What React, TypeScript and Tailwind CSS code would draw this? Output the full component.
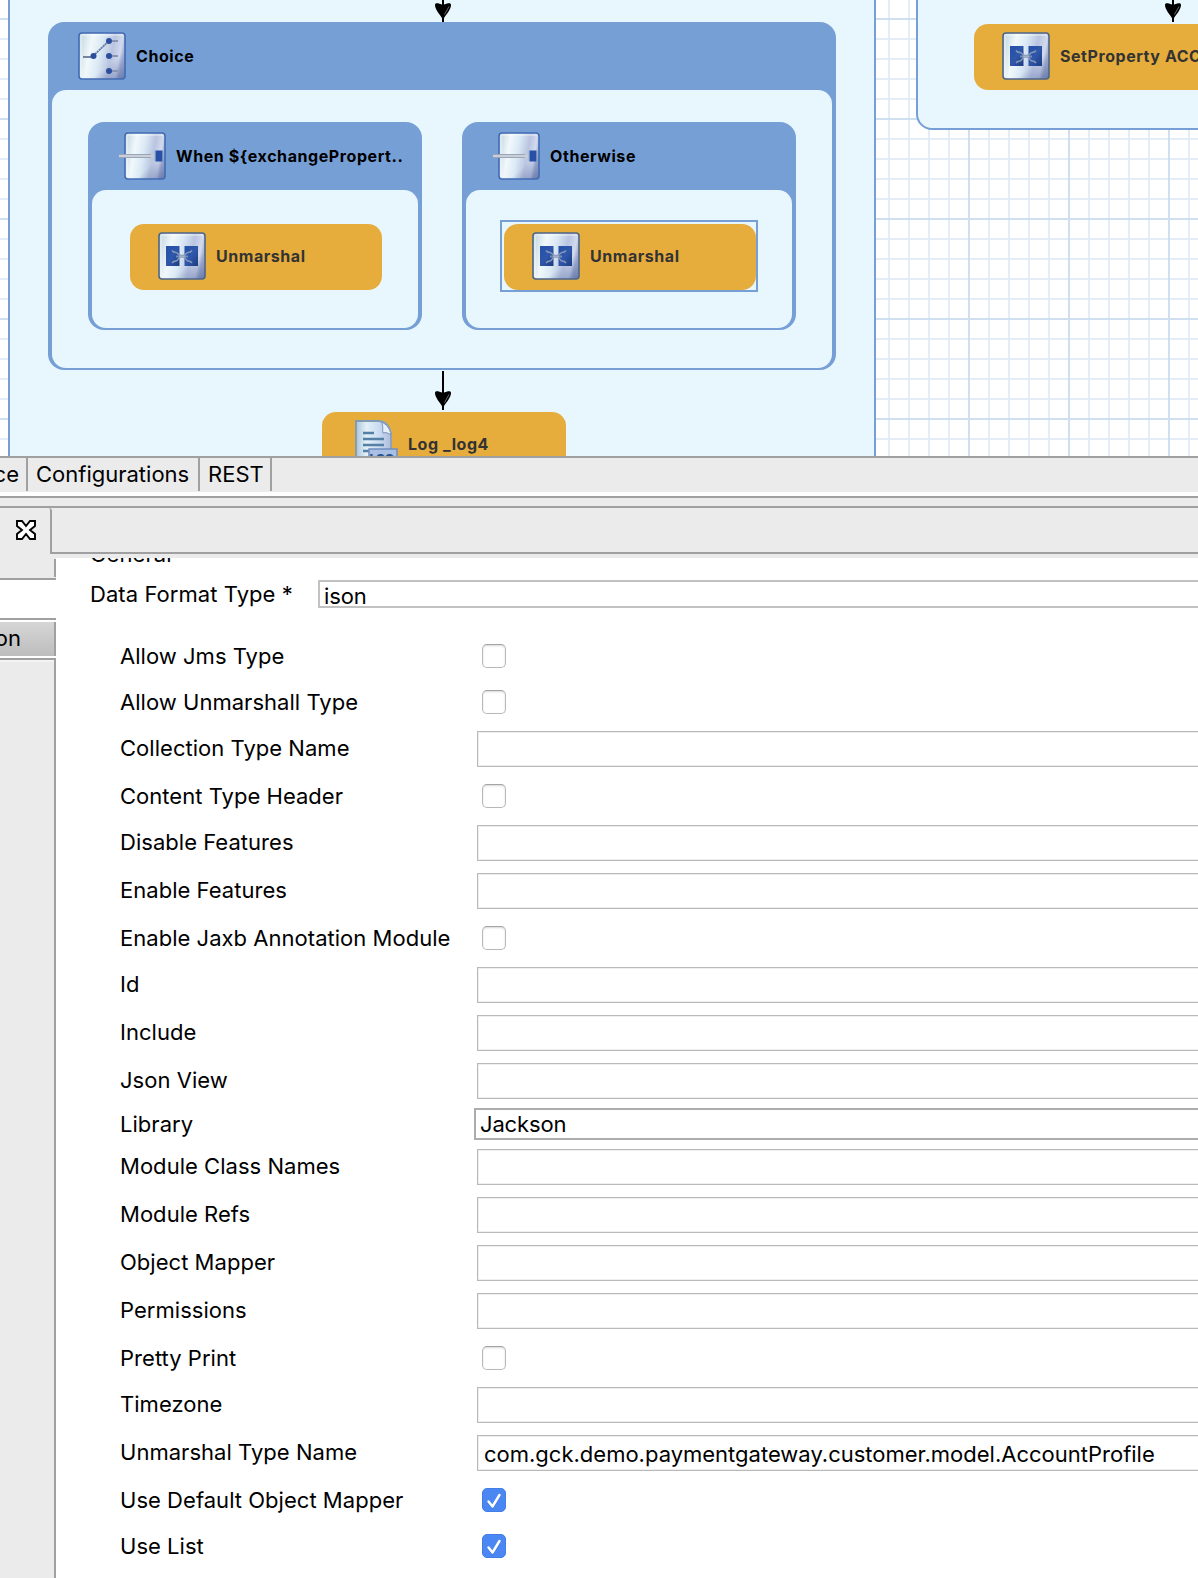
import type { ReactNode } from "react";

const gridStyle = {
  backgroundImage: [
    "linear-gradient(to right, #d0dff0 2px, transparent 2px)",
    "linear-gradient(to bottom, #d0dff0 2px, transparent 2px)",
    "linear-gradient(to right, #e4ecf7 2px, transparent 2px)",
    "linear-gradient(to bottom, #e4ecf7 2px, transparent 2px)",
  ].join(","),
  backgroundSize: "100px 100px, 100px 100px, 20px 20px, 20px 20px",
  backgroundPosition: "68px 0, 0 18px, 8px 0, 0 18px",
};

function Plate({ x = 1, w = 46, edge }: { x?: number; w?: number; edge: string }) {
  return (
    <>
      <defs>
        <linearGradient id="plate" x1="0" y1="0.1" x2="1" y2="0.3">
          <stop offset="0" stopColor="#bfd5e0" />
          <stop offset="0.28" stopColor="#f1f8fb" />
          <stop offset="0.5" stopColor="#dbeaf5" />
          <stop offset="0.75" stopColor="#b9c4e0" />
          <stop offset="0.92" stopColor="#d2daee" />
          <stop offset="1" stopColor="#a6b1d4" />
        </linearGradient>
        <linearGradient id="shade" x1="0.5" y1="0.4" x2="1" y2="1">
          <stop offset="0.4" stopColor="#5b6ea5" stopOpacity="0" />
          <stop offset="1" stopColor="#4a5f98" stopOpacity="0.7" />
        </linearGradient>
        <linearGradient id="ink" x1="0" y1="0" x2="1" y2="1">
          <stop offset="0" stopColor="#2450a8" />
          <stop offset="0.5" stopColor="#2f57aa" />
          <stop offset="1" stopColor="#1d3c80" />
        </linearGradient>
      </defs>
      <rect x={x} y="1" width={w} height="46" rx="3" fill="url(#plate)" />
      <rect x={x} y="1" width={w} height="46" rx="3" fill="url(#shade)" stroke={edge} strokeWidth="1.6" />
      <path d={`M${x + 2} 45V3H${x + w - 2}`} fill="none" stroke="#fff" strokeOpacity="0.45" strokeWidth="1.5" />
    </>
  );
}

function ChoiceIcon() {
  return (
    <svg viewBox="0 0 48 48" className="size-12 shrink-0">
      <Plate edge="#426bb4" />
      <g stroke="#8794b4" strokeWidth="1.8" fill="none">
        <path d="M5 25h10" stroke="#6a7896" />
        <path d="M15 24 31 9" strokeDasharray="2.2 0.5" stroke="#6d7da2" />
        <path d="M31 9h9M31 24h9M31 39h9" />
      </g>
      <g fill="#2b4f9e">
        <circle cx="15.5" cy="24" r="3" />
        <circle cx="31" cy="9" r="3" />
        <circle cx="31" cy="24" r="3" />
        <circle cx="31" cy="39" r="3" />
      </g>
    </svg>
  );
}

function BranchIcon() {
  return (
    <svg viewBox="0 0 48 48" className="size-12 shrink-0">
      <Plate x={7} w={40} edge="#426bb4" />
      <path d="M1 24h33" stroke="#9aa5b8" strokeWidth="4" />
      <path d="M1 24h33" stroke="#c9d0da" strokeWidth="2" />
      <path d="m32 20.500 3.500 3.500-3.500 3.500" stroke="#c5ccd8" strokeWidth="1.5" fill="none" />
      <rect x="38" y="18.500" width="6" height="11" fill="#2850a4" />
      <path d="M37.400 18.500v11M44.600 18.500v11" stroke="#6f8cc4" strokeWidth="1.200" />
    </svg>
  );
}

function TransformIcon() {
  return (
    <svg viewBox="0 0 48 48" className="size-12 shrink-0">
      <Plate edge="#4c6689" />
      <rect x="8" y="14" width="13.500" height="20" fill="url(#ink)" />
      <rect x="26.500" y="14" width="13.500" height="20" fill="url(#ink)" />
      <g fill="none" stroke="#8797b8" strokeWidth="1.500">
        <path d="M14 18.500c1 1.500 2 2 4 2s2 3 5 3h2c3 0 3-3 5-3s3-.5 4-2" />
        <path d="M14 31c1-1.500 2-2 4-2s2-4 5-4h2c3 0 3 4 5 4s3 .5 4 2" />
      </g>
      <path d="M18 24.500h12" stroke="#a9b5cb" strokeWidth="2" strokeOpacity="0.6" />
    </svg>
  );
}

function LogIcon() {
  return (
    <svg viewBox="0 0 48 48" className="size-12 shrink-0">
      <defs>
        <linearGradient id="sheet" x1="0" x2="1">
          <stop offset="0" stopColor="#a9c5d9" />
          <stop offset="0.3" stopColor="#e4f0f9" />
          <stop offset="0.65" stopColor="#cbdcf1" />
          <stop offset="1" stopColor="#aebbdc" />
        </linearGradient>
      </defs>
      <path d="M6 1h24c6 1 11 7 11 13v34H6z" fill="url(#sheet)" />
      <path d="M6 48V1h24" fill="none" stroke="#7e9ab4" strokeWidth="1.800" />
      <path d="M30 1c6 1 10 6 11 13v16" fill="none" stroke="#8aa0c0" strokeWidth="1.800" />
      <path d="M31 2c3 4 1 8 2 11 3-1 5 0 8 2-1-6-4-11-10-13z" fill="#e6f1fb" stroke="#7794b8" strokeWidth="1" />
      <path d="M13 13h11M13 19h21M13 25h21M13 31h8" stroke="#5580a6" strokeWidth="2.600" />
      <rect x="19" y="29" width="28" height="18" fill="#a9bfe3" stroke="#6e8ec0" strokeWidth="1.500" />
      <text x="19.500" y="43.500" fontFamily="Inter, sans-serif" fontWeight="800" fontSize="13" letterSpacing="-1" fill="#2b5590">
        LOG
      </text>
    </svg>
  );
}

function Arrow({ className }: { className: string }) {
  return (
    <svg viewBox="0 0 18 40" className={`absolute h-10 w-[18px] ${className}`}>
      <path d="M9 0v39" stroke="#000" strokeWidth="2" />
      <path d="M1 22c0-2.500 3-2 8 0 5-2 8-2.500 8 0 0 5-5 9-8 15C6 31 1 27 1 22z" fill="#000" />
      <path d="m15 23.500-4.500 8" stroke="#999" strokeWidth="0.7" />
    </svg>
  );
}

function Step({ icon, label, className }: { icon: ReactNode; label: string; className: string }) {
  return (
    <div className={`flex items-start gap-[10px] rounded-[14px] bg-[#e6ad3c] pt-2 pl-7 ${className}`}>
      {icon}
      <span className="text-[16px] leading-[48px] font-bold tracking-[0.55px] whitespace-nowrap text-[#333]">{label}</span>
    </div>
  );
}

function Branch({ icon, label, className, children }: { icon: ReactNode; label: string; className: string; children?: ReactNode }) {
  return (
    <div className={`flex flex-col rounded-2xl bg-[#769fd6] px-1 pb-0.5 ${className}`}>
      <div className="flex h-[68px] shrink-0 items-start gap-[10px] pt-[10px] pl-[26px]">
        {icon}
        <span className="text-[16px] leading-[48px] font-bold tracking-[0.58px] whitespace-nowrap text-black">{label}</span>
      </div>
      <div className="flex-1 rounded-[14px] bg-[#e8f7fe]">{children}</div>
    </div>
  );
}

type Field = { label: string; kind: "check" | "text" | "combo"; value?: string; on?: boolean };

const fields: Field[] = [
  { label: "Allow Jms Type", kind: "check" },
  { label: "Allow Unmarshall Type", kind: "check" },
  { label: "Collection Type Name", kind: "text" },
  { label: "Content Type Header", kind: "check" },
  { label: "Disable Features", kind: "text" },
  { label: "Enable Features", kind: "text" },
  { label: "Enable Jaxb Annotation Module", kind: "check" },
  { label: "Id", kind: "text" },
  { label: "Include", kind: "text" },
  { label: "Json View", kind: "text" },
  { label: "Library", kind: "combo", value: "Jackson" },
  { label: "Module Class Names", kind: "text" },
  { label: "Module Refs", kind: "text" },
  { label: "Object Mapper", kind: "text" },
  { label: "Permissions", kind: "text" },
  { label: "Pretty Print", kind: "check" },
  { label: "Timezone", kind: "text" },
  { label: "Unmarshal Type Name", kind: "text", value: "com.gck.demo.paymentgateway.customer.model.AccountProfile" },
  { label: "Use Default Object Mapper", kind: "check", on: true },
  { label: "Use List", kind: "check", on: true },
];

const rowHeight = { check: "h-[34px]", text: "h-9", combo: "h-[26px]" };
const labelPad = { check: "", text: "pb-0.5", combo: "" };

function Control({ field }: { field: Field }) {
  if (field.kind === "check") {
    return field.on ? (
      <span className="ml-[5px] flex size-6 items-center justify-center rounded-[5px] border border-[#437ee6] bg-[#4a87f3]">
        <svg viewBox="0 0 24 24" className="size-6 shrink-0">
          <path d="m6.500 13.500 4 5 7-11.500" fill="none" stroke="#2b62c4" strokeOpacity="0.5" strokeWidth="2.600" strokeLinecap="round" strokeLinejoin="round" transform="translate(0 0.8)" />
          <path d="m6.500 13.500 4 5 7-11.500" fill="none" stroke="#fff" strokeWidth="2.500" strokeLinecap="round" strokeLinejoin="round" />
        </svg>
      </span>
    ) : (
      <span className="ml-[5px] size-6 rounded-[5px] border border-[#b8b8b8] border-t-[#a4a4a4] bg-white shadow-[inset_0_1px_2px_#d8d8d8]" />
    );
  }
  if (field.kind === "combo") {
    return (
      <span className="-ml-[3px] flex h-8 flex-1 items-center border-2 border-r-0 border-[#adadad] bg-white pl-1 tracking-[-0.15px]">
        {field.value}
      </span>
    );
  }
  return (
    <span className="flex h-9 flex-1 items-center border border-r-0 border-[#b9b9b9] bg-white pt-0.5 pl-[6px] shadow-[inset_1px_1px_0_#eee,inset_0_-1px_0_#eee]">
      {field.value}
    </span>
  );
}

export default function App() {
  return (
    <div className="flex h-[1578px] w-[1198px] flex-col overflow-hidden bg-white font-['Inter',sans-serif] text-[22px] text-black">
      <div className="relative h-[456px] shrink-0 overflow-hidden bg-white" style={gridStyle}>
        <div className="absolute -top-5 left-2 h-[500px] w-[868px] border-x-2 border-[#769fd6] bg-[#e8f7fe]" />
        <div className="absolute -top-5 left-[916px] h-[150px] w-[400px] rounded-2xl border-2 border-[#769fd6] bg-[#e8f7fe]" />

        <Branch className="absolute top-[22px] left-12 h-[348px] w-[788px]" icon={<ChoiceIcon />} label="Choice">
          <div className="flex gap-10 px-9 pt-8">
            <Branch className="h-[208px] w-[334px]" icon={<BranchIcon />} label="When ${exchangePropert..">
              <div className="pt-[34px] pl-[38px]">
                <Step className="h-[66px] w-[252px]" icon={<TransformIcon />} label="Unmarshal" />
              </div>
            </Branch>
            <Branch className="h-[208px] w-[334px]" icon={<BranchIcon />} label="Otherwise">
              <div className="ml-[34px] pt-[30px]">
                <div className="h-[72px] w-[258px] border-2 border-[#769fd6] pt-0.5 pl-0.5">
                  <Step className="h-[66px] w-[252px]" icon={<TransformIcon />} label="Unmarshal" />
                </div>
              </div>
            </Branch>
          </div>
        </Branch>

        <Step className="absolute top-6 left-[974px] h-[66px] w-[300px]" icon={<TransformIcon />} label="SetProperty ACC" />
        <Step className="absolute top-[412px] left-[322px] h-[66px] w-[244px]" icon={<LogIcon />} label="Log _log4" />
        <Arrow className="-top-[17px] left-[434px]" />
        <Arrow className="top-[371px] left-[434px]" />
        <Arrow className="-top-[17px] left-[1164px]" />
      </div>

      <div className="flex h-9 shrink-0 border-t-2 border-[#a0a0a0] bg-[#ebebeb] leading-[33px]">
        <span className="flex h-[33px] w-7 justify-end border-r-2 border-[#a0a0a0] pr-[7px]">ce</span>
        <span className="h-[33px] w-[172px] border-r-2 border-[#a0a0a0] pl-2">Configurations</span>
        <span className="h-[33px] w-[72px] border-r-2 border-[#a0a0a0] pl-2">REST</span>
      </div>
      <div className="h-1 shrink-0" />
      <div className="h-[10px] shrink-0 border-t-2 border-[#a0a0a0] bg-[#ebebeb]" />
      <div className="flex h-[52px] shrink-0 border-t-2 border-[#a0a0a0] bg-[#ebebeb]">
        <div className="h-[46px] w-[52px] rounded-tr-[3px] border-r-2 border-[#a0a0a0] pt-3 pl-4">
          <svg viewBox="0 0 20 20" className="size-5">
            <path d="M1 1h5l4 5 4-5h5v5l-5 4 5 4v5h-5l-4-5-4 5H1v-5l5-4-5-4z" fill="#fff" stroke="#000" strokeWidth="1.900" />
          </svg>
        </div>
        <div className="h-[46px] flex-1 border-b-2 border-[#a0a0a0]" />
      </div>

      <div className="flex flex-1">
        <div className="-mt-0.5 flex w-14 shrink-0 flex-col bg-white">
          <div className="flex h-6 flex-col border-b-2 border-[#a0a0a0] bg-[#ebebeb]">
            <div className="mt-[3px] h-[18px] border-r-2 border-[#a0a0a0]" />
          </div>
          <div className="h-[38px]" />
          <div className="h-1 border-t-2 border-[#a0a0a0]" />
          <div className="flex h-[34px] items-center justify-end border-r-2 border-[#a0a0a0] bg-linear-to-b from-[#d6d6d6] to-[#bdbdbd] pr-[33px] pb-0.5">on</div>
          <div className="h-1 border-b-2 border-[#a0a0a0]" />
          <div className="flex-1 border-r-2 border-[#a0a0a0] bg-[#ebebeb] shadow-[inset_0_2px_0_#f3f3f3]" />
        </div>
        <div className="flex flex-1 flex-col overflow-hidden">
          <div className="flex h-[22px] items-start overflow-hidden pl-[34px]">
            <span className="-mt-4 leading-6 tracking-[0.1px]">General</span>
          </div>
          <div className="flex h-7 items-center">
            <span className="w-[262px] pt-px pl-[34px] tracking-[0.06px] whitespace-nowrap">Data Format Type *</span>
            <span className="flex h-7 flex-1 items-center border-2 border-r-0 border-[#c2c2c2] pt-1 pl-1 tracking-[-0.1px]">ison</span>
          </div>
          <div className="mt-[31px] flex flex-col gap-3 pl-16">
            {fields.map((f) => (
              <div key={f.label} className={`flex items-center ${rowHeight[f.kind]}`}>
                <span className={`w-[357px] shrink-0 tracking-[0.03px] whitespace-nowrap ${labelPad[f.kind]}`}>{f.label}</span>
                <Control field={f} />
              </div>
            ))}
          </div>
        </div>
      </div>
    </div>
  );
}
